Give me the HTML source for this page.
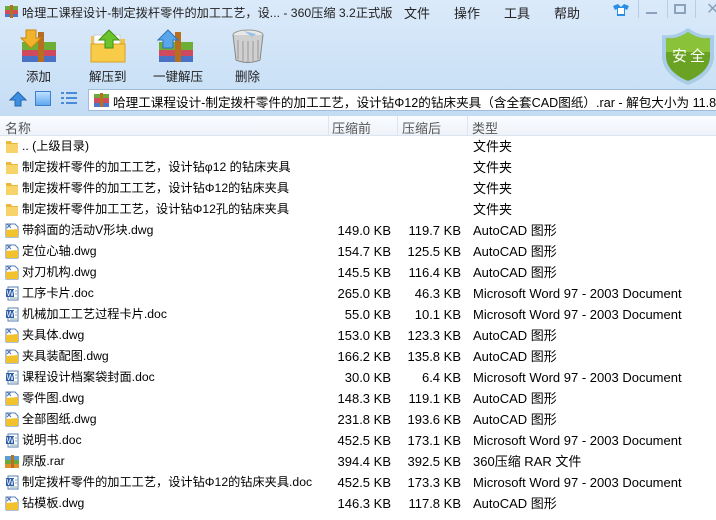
<!DOCTYPE html>
<html><head><meta charset="utf-8"><style>
*{margin:0;padding:0;box-sizing:border-box}
body{width:716px;height:520px;overflow:hidden;font-family:"Liberation Sans","Noto Sans CJK SC",sans-serif;font-size:13px;color:#000;background:#fff;position:relative}
.top{position:absolute;left:0;top:0;width:716px;height:116px;background:linear-gradient(#dbeafa,#c9e0f6 80%,#c3dbf3)}
.t{position:absolute;white-space:nowrap}
.title{top:3px;left:22px;font-size:12.2px;color:#222}
.menu{top:3px;font-size:13px;color:#222}
.tb{position:absolute;top:28px;width:40px;height:36px}
.lbl{position:absolute;top:66px;font-size:12.5px;color:#222}
.addr{position:absolute;left:88px;top:89px;width:630px;height:22px;background:#fff;border:1px solid #9fbcd8}
.hdr{position:absolute;left:0;top:116px;width:716px;height:20px;background:linear-gradient(#fafcff,#eef3f9);border-bottom:1px solid #dde6f0;color:#555}
.row{position:absolute;left:0;width:716px;height:21px;line-height:21px}
.ic{position:absolute;left:5px;top:3px;width:14px;height:15px}
.n{position:absolute;left:22px;font-size:12.2px}
.s1{position:absolute;right:325px}
.s2{position:absolute;right:255px}
.ty{position:absolute;left:473px;font-size:13px}
</style></head><body>
<div class="top"></div>
<svg class="t" style="left:4px;top:4px" width="15" height="14"><rect x="1" y="2" width="13" height="4" fill="#6aa93a"/><rect x="1" y="6" width="13" height="4" fill="#d24d5a"/><rect x="1" y="10" width="13" height="3" fill="#4d77c9"/><rect x="6" y="1" width="3" height="13" fill="#b8701e"/></svg>
<div class="t title">哈理工课程设计-制定拨杆零件的加工工艺，设... - 360压缩 3.2正式版</div>
<div class="t menu" style="left:404px">文件</div>
<div class="t menu" style="left:454px">操作</div>
<div class="t menu" style="left:504px">工具</div>
<div class="t menu" style="left:554px">帮助</div>
<svg class="t" style="left:612px;top:3px" width="18" height="14"><path d="M1 3 L6 1 L9 4 L12 1 L17 3 L15 7 L13 6 L13 13 L5 13 L5 6 L3 7Z" fill="#2a8ee6"/><path d="M6 5 L12 5 L12 11 L6 11Z" fill="#fff"/></svg>
<div class="t" style="left:638px;top:0;width:1px;height:18px;background:#b6cfe8"></div>
<div class="t" style="left:646px;top:12px;width:11px;height:2px;background:#8aa3bb"></div>
<div class="t" style="left:667px;top:0;width:1px;height:18px;background:#b6cfe8"></div>
<div class="t" style="left:674px;top:4px;width:12px;height:10px;border:2px solid #8aa3bb"></div>
<div class="t" style="left:695px;top:0;width:1px;height:18px;background:#b6cfe8"></div>
<div class="t" style="left:706px;top:-1px;color:#8aa3bb;font-size:16px">✕</div>
<svg class="t" style="left:660px;top:26px" width="56" height="60"><path d="M28 2 C38 9 46 10 54 9 L54 30 C54 44 42 54 28 59 C14 54 2 44 2 30 L2 9 C10 10 18 9 28 2Z" fill="#a9cde6"/><path d="M28 6 C37 12 44 13 50 12 L50 30 C50 42 40 50 28 55 C16 50 6 42 6 30 L6 12 C12 13 19 12 28 6Z" fill="#6aa324"/><path d="M28 6 C37 12 44 13 50 12 L50 26 L6 26 L6 12 C12 13 19 12 28 6Z" fill="#8ac23a"/></svg>
<div class="t" style="left:672px;top:45px;color:#fff;font-size:15px;letter-spacing:3px">安全</div>
<svg class="tb" style="left:20px" viewBox="0 0 40 36"><rect x="2" y="14" width="34" height="8" fill="#6fae35"/><rect x="2" y="22" width="34" height="6" fill="#cf4a5e"/><rect x="2" y="28" width="34" height="6" fill="#4a72c4"/><rect x="18" y="4" width="6" height="30" fill="#b76e1e"/><path d="M6 2 H16 V10 H21 L11 20 L1 10 H6Z" fill="#f2b32c" stroke="#c98712"/></svg>
<svg class="tb" style="left:88px" viewBox="0 0 40 36"><path d="M3 8 H14 L17 11 H37 V34 H3Z" fill="#f4c042"/><rect x="6" y="7" width="26" height="12" fill="#fff" stroke="#ccc"/><path d="M3 16 H37 V34 H3Z" fill="#f8cc48" stroke="#d9a020"/><path d="M21 2 L31 12 H25 V20 H17 V12 H11Z" fill="#6cc42c" stroke="#3f8f15"/></svg>
<svg class="tb" style="left:157px" viewBox="0 0 40 36"><rect x="2" y="14" width="34" height="8" fill="#6fae35"/><rect x="2" y="22" width="34" height="6" fill="#cf4a5e"/><rect x="2" y="28" width="34" height="6" fill="#4a72c4"/><rect x="18" y="4" width="6" height="30" fill="#b76e1e"/><path d="M11 2 L21 12 H16 V20 H6 V12 H1Z" fill="#5aa6ea" stroke="#2c74c0"/></svg>
<svg class="tb" style="left:228px" viewBox="0 0 40 36"><ellipse cx="20" cy="7" rx="15" ry="5" fill="#e8e8e8" stroke="#999"/><path d="M5 7 L8 32 Q20 37 32 32 L35 7" fill="#d0d0d0" stroke="#888"/><path d="M10 12 V31 M15 13 V33 M20 13 V34 M25 13 V33 M30 12 V31" stroke="#999"/><path d="M16 3 L28 6 L24 9 Z" fill="#9ac0e8"/></svg>
<div class="lbl" style="left:26px">添加</div>
<div class="lbl" style="left:89px">解压到</div>
<div class="lbl" style="left:153px">一键解压</div>
<div class="lbl" style="left:235px">删除</div>
<svg class="t" style="left:9px;top:91px" width="18" height="16"><path d="M9 1 L17 9 H12 V15 H6 V9 H1Z" fill="#3d8ee0" stroke="#2466b0"/></svg>
<div class="t" style="left:35px;top:91px;width:16px;height:15px;border:1px solid #3d7fca;background:linear-gradient(#bfe0ff,#5ea8ee)"></div>
<svg class="t" style="left:60px;top:91px" width="18" height="15"><g fill="#4a8ad8"><rect x="1" y="1" width="3" height="2"/><rect x="6" y="1" width="11" height="2"/><rect x="1" y="6" width="3" height="2"/><rect x="6" y="6" width="11" height="2"/><rect x="1" y="11" width="3" height="2"/><rect x="6" y="11" width="11" height="2"/></g></svg>
<div class="addr"></div>
<svg class="t" style="left:93px;top:92px" width="17" height="16"><rect x="1" y="2" width="15" height="4" fill="#6aa93a"/><rect x="1" y="6" width="15" height="5" fill="#d24d5a"/><rect x="1" y="11" width="15" height="4" fill="#4d77c9"/><rect x="7" y="1" width="3" height="14" fill="#b8701e"/></svg>
<div class="t" style="left:113px;top:92px;font-size:12.6px">哈理工课程设计-制定拨杆零件的加工工艺，设计钻Φ12的钻床夹具（含全套CAD图纸）.rar - 解包大小为 11.8 M</div>
<div class="hdr"><span class="t" style="left:5px;top:2px">名称</span><span class="t" style="left:328px;top:0;width:1px;height:20px;background:#dde6f0"></span><span class="t" style="left:332px;top:2px">压缩前</span><span class="t" style="left:397px;top:0;width:1px;height:20px;background:#dde6f0"></span><span class="t" style="left:402px;top:2px">压缩后</span><span class="t" style="left:467px;top:0;width:1px;height:20px;background:#dde6f0"></span><span class="t" style="left:472px;top:2px">类型</span></div>
<div id="list"></div>
<script>
var F='<svg class="ic" viewBox="0 0 14 15"><path d="M1 2 H6 L7 4 H13 V14 H1Z" fill="#e8b93a"/><path d="M1 5 H13 V14 H1Z" fill="#f7d36a"/></svg>';
var D='<svg class="ic" viewBox="0 0 14 15"><path d="M1 1 H10 L13 4 V14 H1Z" fill="#fff" stroke="#5a7fb0"/><path d="M1 7 L13 6 V14 H1Z" fill="#f2c22e"/><path d="M2 1 L6 5 M6 1 L2 5" stroke="#4a70b0"/></svg>';
var W='<svg class="ic" viewBox="0 0 14 15"><rect x="3" y="1" width="10" height="13" fill="#fff" stroke="#5a7fb0"/><rect x="1" y="3" width="8" height="8" fill="#2f5ea8"/><text x="1.5" y="10" font-size="8" fill="#fff" font-family="Liberation Sans">W</text><path d="M10 5 H12 M10 8 H12 M5 12 H12" stroke="#8aa"/></svg>';
var R='<svg class="ic" viewBox="0 0 14 15"><rect x="0" y="2" width="14" height="4" fill="#5a9ed8"/><rect x="0" y="6" width="14" height="4" fill="#6aa93a"/><rect x="0" y="10" width="14" height="4" fill="#e0902a"/><rect x="6" y="1" width="3" height="13" fill="#b8701e"/></svg>';
var A='AutoCAD 图形',M='Microsoft Word 97 - 2003 Document';
var rows=[[F,'.. (上级目录)','','','文件夹'],[F,'制定拨杆零件的加工工艺，设计钻φ12 的钻床夹具','','','文件夹'],[F,'制定拨杆零件的加工工艺，设计钻Φ12的钻床夹具','','','文件夹'],[F,'制定拨杆零件加工工艺，设计钻Φ12孔的钻床夹具','','','文件夹'],
[D,'带斜面的活动V形块.dwg','149.0 KB','119.7 KB',A],[D,'定位心轴.dwg','154.7 KB','125.5 KB',A],[D,'对刀机构.dwg','145.5 KB','116.4 KB',A],[W,'工序卡片.doc','265.0 KB','46.3 KB',M],[W,'机械加工工艺过程卡片.doc','55.0 KB','10.1 KB',M],[D,'夹具体.dwg','153.0 KB','123.3 KB',A],[D,'夹具装配图.dwg','166.2 KB','135.8 KB',A],[W,'课程设计档案袋封面.doc','30.0 KB','6.4 KB',M],[D,'零件图.dwg','148.3 KB','119.1 KB',A],[D,'全部图纸.dwg','231.8 KB','193.6 KB',A],[W,'说明书.doc','452.5 KB','173.1 KB',M],[R,'原版.rar','394.4 KB','392.5 KB','360压缩 RAR 文件'],[W,'制定拨杆零件的加工工艺，设计钻Φ12的钻床夹具.doc','452.5 KB','173.3 KB',M],[D,'钻模板.dwg','146.3 KB','117.8 KB',A]];
var h='';rows.forEach(function(r,i){h+='<div class="row" style="top:'+(136+i*21)+'px">'+r[0]+'<span class="n">'+r[1]+'</span><span class="s1">'+r[2]+'</span><span class="s2">'+r[3]+'</span><span class="ty">'+r[4]+'</span></div>'});
document.getElementById('list').innerHTML=h;
</script>
</body></html>
